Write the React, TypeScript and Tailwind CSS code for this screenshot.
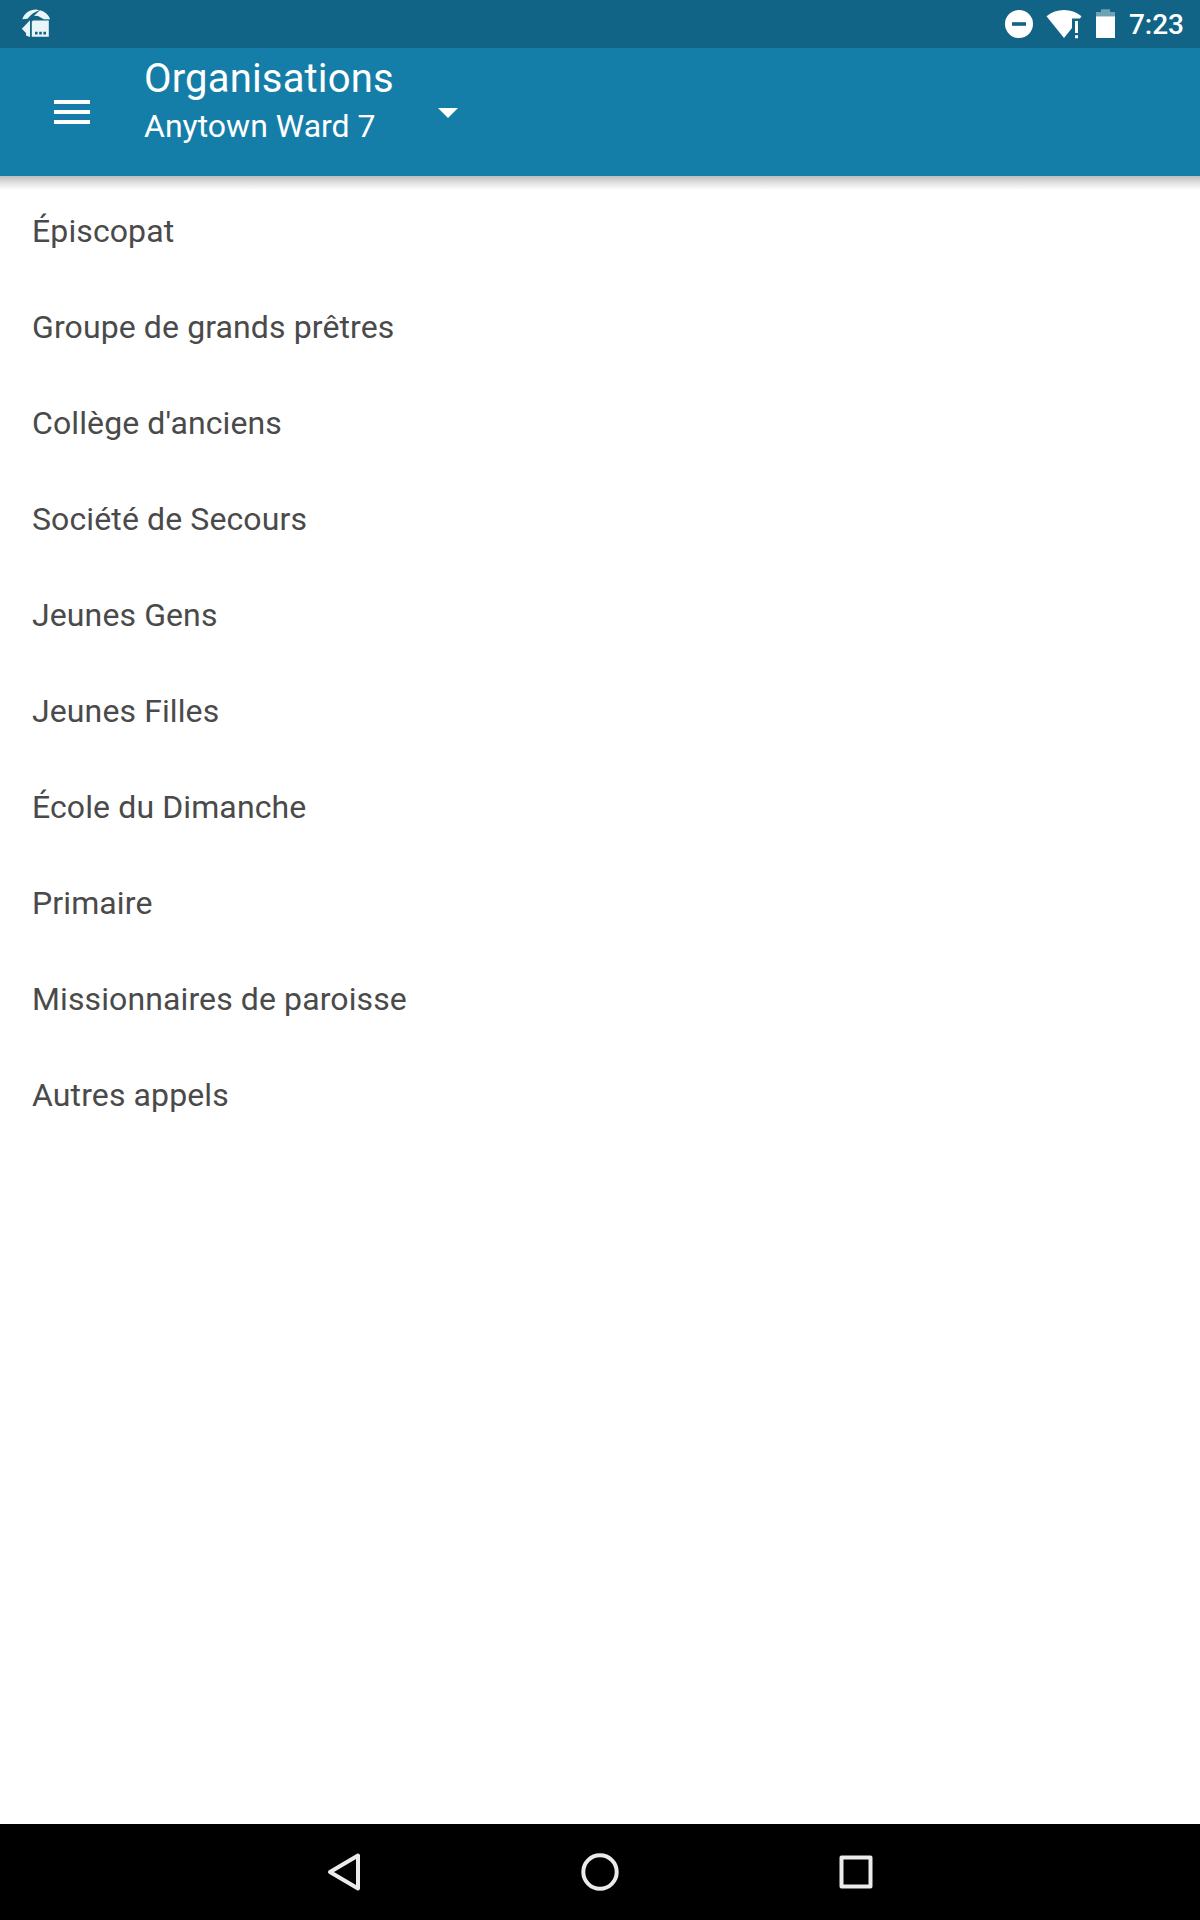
import React from 'react';

const organisations = [
  'Épiscopat',
  'Groupe de grands prêtres',
  "Collège d'anciens",
  'Société de Secours',
  'Jeunes Gens',
  'Jeunes Filles',
  'École du Dimanche',
  'Primaire',
  'Missionnaires de paroisse',
  'Autres appels',
];

function StatusBar() {
  return (
    <div className="flex h-12 items-center justify-between bg-[#116485] pl-5 pr-4 text-white">
      {/* App notification */}
      <svg width="32" height="32" viewBox="20 8 32 32" fill="#eaf5f9">
        <path d="M22.300 19.200C24.500 13 29.500 9.500 36 9.500L39.500 10.200C34.500 11.800 30.500 14.500 27.500 18.700Z" />
        <path d="M40 10.300C45 11.500 48.500 14.500 50.200 19.300H43.800L38 16L34 15.800Z" />
        <path d="M30 20.300V37L26 35.500V33L21.800 28.700Z" />
        <path d="M33 20.600H48.800V36.800H31.800V21.800Z" />
        <path d="M35 31.800h2.600v2.600H35zM39.200 31.800h2.600v2.600h-2.600zM43.400 31.800H46v2.600h-2.600z" fill="#116485" />
      </svg>

      <div className="flex items-center">
        <svg width="112" height="32" viewBox="1004 8 112 32" fill="#fff">
          {/* Do not disturb */}
          <circle cx="1019" cy="24" r="14" />
          <path d="M1012 22.200h14v3.600h-14z" fill="#116485" />
          {/* Wifi */}
          <path d="M1046.500 16.300C1051.500 12.200 1057.500 10 1064 10S1076.500 12.200 1081.500 16.300L1080 18.400H1072V28L1064 38Z" />
          <path d="M1075 21h3v12h-3zM1075 35.200h3v3h-3z" />
          {/* Battery */}
          <path d="M1101 9.200h9V12h5v4.300h-19V12h5z" fillOpacity="0.4" />
          <path d="M1096 16.300h19V38h-19z" />
        </svg>
        <span className="ml-[13px] pt-0.5 text-[28px] leading-none font-medium">7:23</span>
      </div>
    </div>
  );
}

function Toolbar() {
  return (
    <header className="flex h-32 bg-[#157ea8] text-white">
      <button className="flex w-36 items-center pl-[54px]">
        <svg width="36" height="24" viewBox="0 0 36 24" fill="currentColor">
          <path d="M0 0h36v4H0zM0 10h36v4H0zM0 20h36v4H0z" />
        </svg>
      </button>
      <button className="flex items-center">
        <div className="h-full pt-[7px] text-left">
          <h1 className="text-[40px] leading-[47px] tracking-[0.18px]">Organisations</h1>
          <p className="text-[32px] leading-[48px]">Anytown Ward 7</p>
        </div>
        <svg className="ml-11 mt-0.5" width="20" height="10" viewBox="0 0 20 10" fill="currentColor">
          <path d="M0 0h20L10 10z" />
        </svg>
      </button>
    </header>
  );
}

function NavigationBar() {
  return (
    <nav className="flex h-24 items-center justify-center bg-black">
      <svg width="548" height="40" viewBox="326 1852 548 40" fill="none" stroke="#ebebeb" strokeWidth="4" strokeLinejoin="round">
        <path d="M330 1872L358 1855.500V1888.500Z" />
        <circle cx="600" cy="1872" r="16.700" />
        <rect x="841.500" y="1857.500" width="29" height="29" />
      </svg>
    </nav>
  );
}

export default function App() {
  return (
    <div className="flex h-[1920px] w-[1200px] flex-col overflow-hidden bg-white font-[Roboto,sans-serif]">
      <StatusBar />
      <Toolbar />
      <main className="flex-1">
        {/* Toolbar elevation */}
        <div className="h-3.5 bg-linear-to-b from-[#bdbdbd] via-[#e2e2e2] to-white" />
        <ul className="-mt-[7px]">
          {organisations.map((name) => (
            <li key={name} className="flex h-24 items-center px-8 text-[32px] tracking-[0.11px] text-[#4a4a4a]">
              {name}
            </li>
          ))}
        </ul>
      </main>
      <NavigationBar />
    </div>
  );
}
